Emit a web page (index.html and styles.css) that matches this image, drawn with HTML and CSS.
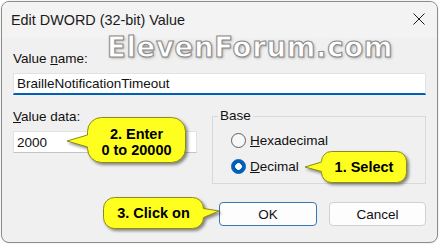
FILE: index.html
```html
<!DOCTYPE html>
<html>
<head>
<meta charset="utf-8">
<link rel="stylesheet" href="styles.css">
</head>
<body>
<div class="dialog">
  <div class="titlebar">
    <span class="title">Edit DWORD (32-bit) Value</span>
    <span class="close"><svg width="12" height="12" viewBox="0 0 12 12"><path d="M0.5 0.5 L11.5 11.5 M11.5 0.5 L0.5 11.5" stroke="#1b1b1b" stroke-width="1" fill="none"/></svg></span>
  </div>
  <div class="content">
    <label class="label first">Value <u>n</u>ame:</label>
    <div class="input focused name">BrailleNotificationTimeout</div>
    <div class="row">
      <div class="col">
        <label class="label"><u>V</u>alue data:</label>
        <div class="input data">2000</div>
      </div>
      <fieldset class="base">
        <legend>Base</legend>
        <div class="radio"><span class="dot"></span><span><u>H</u>exadecimal</span></div>
        <div class="radio checked"><span class="dot"></span><span><u>D</u>ecimal</span></div>
      </fieldset>
    </div>
    <div class="buttons">
      <div class="btn default">OK</div>
      <div class="btn">Cancel</div>
    </div>
  </div>
</div>

<div class="watermark">ElevenForum.com</div>

<div class="callout c1">
  <svg width="104" height="34" viewBox="0 0 104 34"><path d="M27.5 1.5 H92.5 A10 10 0 0 1 102.5 11.5 V22.5 A10 10 0 0 1 92.5 32.5 H27.5 A10 10 0 0 1 17.5 22.5 V21.5 L1 17 L17.5 12 V11.5 A10 10 0 0 1 27.5 1.5 Z"/></svg>
  <div class="callout-text">1. Select</div>
</div>

<div class="callout c2">
  <svg width="121" height="48" viewBox="0 0 121 48"><path d="M35.5 1.5 H105.5 A14 14 0 0 1 119.5 15.5 V32.5 A14 14 0 0 1 105.5 46.5 H35.5 A14 14 0 0 1 21.5 32.5 V31 L1 25 L21.5 19 V15.5 A14 14 0 0 1 35.5 1.5 Z"/></svg>
  <div class="callout-text">2. Enter<br>0 to 20000</div>
</div>

<div class="callout c3">
  <svg width="119" height="34" viewBox="0 0 119 34"><path d="M12.5 1.5 H90.5 A11 11 0 0 1 101.5 12.5 L117 15 L101.5 21.5 A11 11 0 0 1 90.5 32.5 H12.5 A11 11 0 0 1 1.5 21.5 V12.5 A11 11 0 0 1 12.5 1.5 Z"/></svg>
  <div class="callout-text">3. Click on</div>
</div>
</body>
</html>
```

FILE: styles.css
```css
* { box-sizing: border-box; }

body {
  margin: 0;
  width: 440px;
  height: 245px;
  overflow: hidden;
  position: relative;
  background: #ffffff;
  font-family: "Liberation Sans", Arial, sans-serif;
  color: #000;
}

.dialog {
  margin: 1px 0 0 1px;
  width: 437px;
  height: 242px;
  background: #f0f0f0;
  border: 1px solid #8c8c8c;
  border-radius: 8px;
  display: flex;
  flex-direction: column;
  box-shadow: 0 0 2px rgba(0, 0, 0, 0.15);
}

.titlebar {
  height: 36px;
  display: flex;
  align-items: center;
  justify-content: space-between;
  padding-left: 9px;
  background: #f3f3f3;
  border-radius: 7px 7px 0 0;
}

.title {
  font-size: 14.4px;
  line-height: 16px;
  color: #1a1a1a;
}

.close {
  width: 36px;
  height: 36px;
  display: flex;
  align-items: center;
  justify-content: center;
  padding-bottom: 2px;
}

.content {
  padding: 0 11px;
  display: flex;
  flex-direction: column;
}

.label {
  display: block;
  font-size: 13.5px;
  line-height: 16px;
  color: #111;
}

.label.first { margin-top: 13px; }

u { text-underline-offset: 1px; text-decoration-thickness: 1px; }

.input {
  height: 22px;
  margin-top: 6px;
  background: #fff;
  border: 1px solid #e2e2e2;
  border-bottom-color: #c4c4c4;
  display: flex;
  align-items: center;
  padding: 0 3px;
  font-size: 13.5px;
  color: #111;
}

.input.focused {
  border-bottom: 2px solid #005fb8;
}

.row {
  display: flex;
  align-items: flex-start;
  margin-top: 14px;
}

.col {
  width: 184px;
  display: flex;
  flex-direction: column;
}

.base {
  margin: 0 -1px 0 15px;
  width: 214px;
  min-width: 0;
  padding: 7px 0 7px 5px;
  border: 1px solid #d9d9d9;
}

.base legend {
  padding: 0 2px;
  font-size: 13.5px;
  line-height: 14px;
  color: #111;
}

.radio {
  display: flex;
  align-items: center;
  gap: 4px;
  height: 20px;
  margin-left: 13px;
  font-size: 13.5px;
  color: #111;
}

.radio + .radio { margin-top: 6px; }

.dot {
  width: 15px;
  height: 15px;
  border-radius: 50%;
  border: 1px solid #5e5e5e;
  background: #f7f7f7;
  flex: none;
}

.checked .dot {
  border-color: #005fb8;
  background: radial-gradient(circle, #ffffff 0 3px, #005fb8 3.6px);
}

.buttons {
  display: flex;
  justify-content: flex-end;
  gap: 12px;
  margin-top: 18px;
}

.btn {
  width: 97px;
  height: 24px;
  border: 1px solid #d0d0d0;
  border-radius: 4px;
  background: #fdfdfd;
  display: flex;
  align-items: center;
  justify-content: center;
  font-size: 13.5px;
  color: #111;
}

.btn.default {
  width: 98px;
  border-color: #3a76b0;
}

.watermark {
  position: absolute;
  left: 107px;
  top: 33px;
  font-family: "DejaVu Sans", sans-serif;
  font-weight: bold;
  font-size: 27.5px;
  line-height: 28px;
  letter-spacing: 0.7px;
  color: #ffffff;
  -webkit-text-stroke: 1px #8a8a8a;
  text-shadow: 1px 1px 3px rgba(0, 0, 0, 0.35);
  white-space: nowrap;
}

.callout { position: absolute; }

.callout svg {
  position: absolute;
  left: 0;
  top: 0;
  overflow: visible;
  filter: drop-shadow(2px 2px 1.5px rgba(0, 0, 0, 0.45));
}

.callout svg path {
  fill: #ffff1f;
  stroke: #8a8a18;
  stroke-width: 1;
}

.callout-text {
  position: absolute;
  display: flex;
  align-items: center;
  justify-content: center;
  text-align: center;
  font-family: "Liberation Sans", Arial, sans-serif;
  font-weight: bold;
  font-size: 14.5px;
  line-height: 16.5px;
  color: #000;
}

.c1 { left: 304px; top: 150px; width: 104px; height: 34px; }
.c1 .callout-text { left: 17px; top: 1px; width: 86px; height: 32px; }

.c2 { left: 66px; top: 116px; width: 121px; height: 48px; }
.c2 .callout-text { left: 21px; top: 3.5px; width: 99px; height: 45px; }

.c3 { left: 102px; top: 196px; width: 119px; height: 34px; }
.c3 .callout-text { left: 1px; top: 1px; width: 101px; height: 32px; }
```
